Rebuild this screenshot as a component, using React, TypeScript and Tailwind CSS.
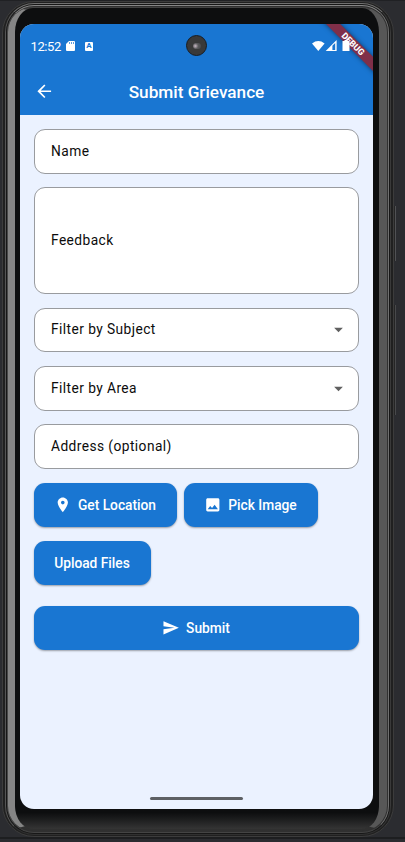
import React from "react";

const text = "font-['Roboto','Liberation_Sans',sans-serif]";

function Icon({ d, className }: { d: string; className: string }) {
  return (
    <svg viewBox="0 0 24 24" fill="currentColor" className={`block shrink-0 ${className}`}>
      <path d={d} fillRule="evenodd" />
    </svg>
  );
}

const icons = {
  back: "M20 11H7.83l5.59-5.59L12 4l-8 8 8 8 1.41-1.41L7.83 13H20v-2z",
  place: "M12 2C8.13 2 5 5.13 5 9c0 5.25 7 13 7 13s7-7.75 7-13c0-3.87-3.13-7-7-7zm0 9.5a2.5 2.5 0 0 1 0-5 2.5 2.5 0 0 1 0 5z",
  image: "M21 19V5c0-1.1-.9-2-2-2H5c-1.1 0-2 .9-2 2v14c0 1.1.9 2 2 2h14c1.1 0 2-.9 2-2zM8.5 13.5l2.5 3.01L14.5 12l4.5 6H5l3.5-4.5z",
  send: "M2.01 21L23 12 2.01 3 2 10l15 2-15 2z",
  drop: "M7 10l5 5 5-5z",
};

function Field({ label, className, dropdown }: { label: string; className: string; dropdown?: boolean }) {
  return (
    <div className={`flex items-center justify-between rounded-[11px] border border-[#999b9f] bg-white pr-[9px] pl-4 text-[13.75px] tracking-[0.43px] text-[#0c0c0c] ${className}`}>
      <span>{label}</span>
      {dropdown && <Icon d={icons.drop} className="h-[21px] w-[21px] text-[#606060]" />}
    </div>
  );
}

function Button({ label, icon, className }: { label: string; icon?: string; className: string }) {
  return (
    <button className={`flex h-11 items-center justify-center gap-[6.4px] rounded-[11px] bg-[#1976d2] pr-px text-[13.75px] font-medium text-white shadow-[0_1px_2px_rgba(0,0,0,0.35)] ${className}`}>
      {icon && <Icon d={icon} className="h-[17.6px] w-[17.6px]" />}
      <span>{label}</span>
    </button>
  );
}

function StatusBar() {
  return (
    <div className="relative flex h-[44px] items-center pl-[10.5px] text-white">
      <span className="w-[30.5px] text-[13px] leading-none tracking-[-0.4px]">12:52</span>
      <svg viewBox="0 0 9 10" className="ml-[5px] h-[10px] w-[9px]">
        <path d="M3 0h5q1 0 1 1v8q0 1-1 1H1q-1 0-1-1V3z" fill="white" />
        <path d="M3.5 1v2M5.5 1v2M7.5 1v2" stroke="#1976d2" strokeWidth=".7" />
      </svg>
      <span className="ml-[10px] flex h-[9px] w-[8px] items-center justify-center rounded-[1px] bg-white text-[8px] leading-none font-bold text-[#1976d2]">A</span>
      <svg viewBox="0 0 40 12" className="ml-[218.5px] h-3 w-10 shrink-0">
        <path d="M0 3.4Q6.3-1.4 12.6 3.4L6.3 11z" fill="white" />
        <path d="M13.7 11L24.6 0v11z" fill="white" />
        <path d="M20.4 5.8L23.2 3V10H20.4z" fill="#1976d2" />
        <path d="M30.5 1h2V0h3v1H37.5v10h-7z" fill="white" />
      </svg>
    </div>
  );
}

export default function App() {
  return (
    <div className={`relative h-[842px] w-[405px] overflow-hidden bg-[#2b2c30] ${text}`}>
      <div className="absolute inset-x-0 top-0 h-px bg-[#202124]" />
      <div className="absolute inset-x-0 top-[837px] h-[2px] bg-[#1d1e20]" />
      <div className="absolute top-[206px] left-[393px] h-[55px] w-[3px] border-r border-[#505154] bg-[#252525]" />
      <div className="absolute top-[261px] left-[392px] h-[44px] w-[2px] bg-[#656565]" />
      <div className="absolute top-[305px] left-[393px] h-[110px] w-[3px] border-r border-[#48494b] bg-[#252525]" />

      <div className="relative ml-[2px] h-[836px] w-[392px] translate-y-px rounded-[32px] border border-[#3c3c3c] bg-[#202020] pt-px pr-[2px] pb-px pl-[2px]">
        <div className="h-full rounded-[29px] border border-t-[#707070] border-r-[#3a3a3a] border-b-[#303030] border-l-[#555] bg-[#171717] p-px">
          <div className="h-full rounded-[27px] border border-t-[#858585] border-r-[#707070] border-b-[#444] border-l-[#484848] bg-[#303030] pt-[1px] pr-[1px] pb-[1px]">
            <div className="h-full rounded-[25px] border-t border-r-[8px] border-b-[2px] border-l-[7px] border-t-[#414141] border-r-[#575757] border-b-[#303030] border-l-[#858585] bg-linear-to-b from-[#0d0e0f] from-98% to-[#353535] pt-[16px] pr-[5px] pl-[5px]">
              <main className="relative h-[785px] w-[353px] overflow-hidden rounded-[14px] bg-[#ebf2ff]">
                <header className="relative h-[91px] bg-[#1976d2] text-white">
                  <div className="absolute top-[15px] left-[283px] flex h-[10.4px] w-[100px] rotate-45 items-center justify-center bg-[#802f49] text-[8.8px] leading-none font-extrabold text-white shadow-[0_0_5px_rgba(0,0,0,0.5)]">DEBUG</div>
                  <StatusBar />
                  <div className="flex h-[47px] items-center px-[14px]">
                    <Icon d={icons.back} className="h-[20.5px] w-[20.5px]" />
                    <h1 className="flex-1 pt-[2px] pr-[20.5px] text-center text-[17.2px] font-medium">Submit Grievance</h1>
                  </div>
                </header>

                <section className="flex flex-col px-[14px] pt-[14px]">
                  <Field label="Name" className="h-[45px]" />
                  <Field label="Feedback" className="mt-[13px] h-[107px]" />
                  <Field label="Filter by Subject" className="mt-[14px] h-[44px] pb-px" dropdown />
                  <Field label="Filter by Area" className="mt-[14px] h-[45px] pb-px" dropdown />
                  <Field label="Address (optional)" className="mt-[13px] h-[45px]" />
                  <div className="mt-[14px] flex flex-wrap gap-x-[7px] gap-y-[14px]">
                    <Button label="Get Location" icon={icons.place} className="w-[143px]" />
                    <Button label="Pick Image" icon={icons.image} className="w-[134px]" />
                    <Button label="Upload Files" className="w-[117px]" />
                  </div>
                  <Button label="Submit" icon={icons.send} className="mt-[21px] w-full" />
                </section>

                <div className="absolute top-[773px] left-[130px] h-[3px] w-[93px] rounded-full bg-[#5d6064]" />
                <div className="absolute top-[11px] left-[166px] h-[21px] w-[21px] rounded-full border border-[#191d22] bg-[#393939]">
                  <div className="mt-[7px] ml-[6px] h-[6px] w-[8px] rounded-full bg-[radial-gradient(circle_at_30%_50%,#c8b9c5,#5a5a5c_45%,#444448)]" />
                </div>
              </main>
            </div>
          </div>
        </div>
      </div>
    </div>
  );
}
